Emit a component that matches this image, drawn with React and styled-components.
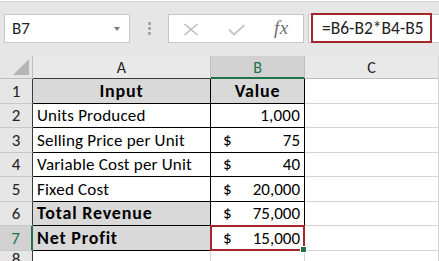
import React from 'react'
import styled, { createGlobalStyle } from 'styled-components'

const GlobalStyle = createGlobalStyle`
    html, body {
        margin: 0;
        padding: 0;
        background: #ffffff;
        overflow: hidden;
    }
    body {
        font-family: 'Carlito', 'Lato', sans-serif;
        color: #000;
    }
`

const rows = [
    { n: 1, label: 'Input', value: 'Value', head: true, h: 25 },
    { n: 2, label: 'Units Produced', value: '1,000', h: 24 },
    { n: 3, label: 'Selling Price per Unit', value: '75', money: true, h: 25 },
    { n: 4, label: 'Variable Cost per Unit', value: '40', money: true, h: 24 },
    { n: 5, label: 'Fixed Cost', value: '20,000', money: true, h: 25 },
    { n: 6, label: 'Total Revenue', value: '75,000', money: true, bold: true, h: 24 },
    { n: 7, label: 'Net Profit', value: '15,000', money: true, bold: true, active: true, h: 25 },
]

function App() {
    return (
        <>
            <GlobalStyle />
            <Page>
                <Toolbar>
                    <NameBox>
                        <span>B7</span>
                        <Caret />
                    </NameBox>
                    <Grip>
                        <i /><i /><i />
                    </Grip>
                    <ButtonBox>
                        <svg width="16" height="13" viewBox="0 0 16 13">
                            <path d="M1.5 1 L14.5 12 M14.5 1 L1.5 12" stroke="#bdbdbd" strokeWidth="1.6" fill="none" />
                        </svg>
                        <svg width="18" height="12" viewBox="0 0 18 12">
                            <path d="M1 5.5 L6 10.5 L16.5 1" stroke="#c4c4c4" strokeWidth="1.8" fill="none" />
                        </svg>
                        <Fx>fx</Fx>
                    </ButtonBox>
                    <FormulaBox>
                        <FormulaText>=B6-B2*B4-B5</FormulaText>
                    </FormulaBox>
                </Toolbar>

                <Sheet rowsTpl={`23px ${rows.map(r => r.h + 'px').join(' ')} 20px`}>
                    <Corner><Triangle /></Corner>
                    <ColHead>A</ColHead>
                    <ColHead selected>B</ColHead>
                    <ColHead last>C</ColHead>

                    {rows.map(r => (
                        <React.Fragment key={r.n}>
                            <RowHead active={r.active}>{r.n}</RowHead>
                            <Cell
                                table
                                fill={r.head || r.bold}
                                bold={r.head || r.bold}
                                center={r.head}
                            >
                                {r.label}
                            </Cell>
                            <Cell
                                table
                                fill={r.head}
                                bold={r.head}
                                center={r.head}
                                right={!r.money && !r.head}
                                selected={r.active}
                            >
                                {r.money ? (
                                    <Money><span>$</span><span>{r.value}</span></Money>
                                ) : r.value}
                                {r.active && <FillHandle />}
                            </Cell>
                            <Cell />
                        </React.Fragment>
                    ))}

                    <RowHead>8</RowHead>
                    <Cell />
                    <Cell />
                    <Cell />
                </Sheet>
            </Page>
        </>
    )
}

export default App

const Page = styled.div`
    width: 439px;
    height: 261px;
    overflow: hidden;
    background: #fff;
    padding-top: 1px;
    box-sizing: border-box;
`

const Toolbar = styled.div`
    height: 55px;
    box-sizing: border-box;
    border-top: 1px solid #d4d4d4;
    background: #e6e6e6;
    display: flex;
    align-items: flex-start;
    padding: 12px 0 0 4px;
`

const NameBox = styled.div`
    width: 126px;
    height: 29px;
    box-sizing: border-box;
    background: #fff;
    border: 1px solid #c6c6c6;
    display: flex;
    align-items: center;
    justify-content: space-between;
    padding: 0 9px 0 7px;
    font-size: 17px;
    color: #222;
`

const Caret = styled.div`
    width: 0;
    height: 0;
    border-left: 3px solid transparent;
    border-right: 3px solid transparent;
    border-top: 4px solid #7a7a7a;
    margin-top: 1px;
`

const Grip = styled.div`
    width: 3px;
    margin: 8px 17px 0 18px;
    display: flex;
    flex-direction: column;
    gap: 2px;

    i {
        display: block;
        width: 3px;
        height: 3px;
        background: #a6a6a6;
    }
`

const ButtonBox = styled.div`
    width: 136px;
    height: 29px;
    box-sizing: border-box;
    background: #fff;
    border: 1px solid #c6c6c6;
    display: flex;
    align-items: center;
    padding: 0 0 0 14px;

    svg:nth-child(1) {
        margin-top: 2px;
    }
    svg:nth-child(2) {
        margin: 2px 0 0 29px;
    }
`

const Fx = styled.span`
    font-family: 'Liberation Serif', serif;
    font-style: italic;
    font-size: 19px;
    color: #6e6e6e;
    margin-left: 28px;
    letter-spacing: 0.5px;
    margin-top: -1px;
`

const FormulaBox = styled.div`
    margin-left: 4px;
    flex: 1;
    height: 29px;
    box-sizing: border-box;
    background: #fff;
    border: 1px solid #c6c6c6;
    border-right: none;
    display: flex;
    align-items: center;
    padding-left: 2px;
`

const FormulaText = styled.div`
    width: 121px;
    height: 30px;
    margin-top: -2px;
    box-sizing: border-box;
    border: 2px solid #a4262c;
    display: flex;
    align-items: center;
    padding-left: 9px;
    font-size: 17.5px;
    color: #222;
    white-space: nowrap;
`

const Sheet = styled.div`
    display: grid;
    grid-template-columns: 33px 178px 94px 1fr;
    grid-template-rows: ${p => p.rowsTpl};
`

const Corner = styled.div`
    background: #e6e6e6;
    border-right: 1px solid #bdbdbd;
    border-bottom: 1px solid #bdbdbd;
    position: relative;
`

const Triangle = styled.div`
    position: absolute;
    right: 3px;
    bottom: 3px;
    width: 0;
    height: 0;
    border-left: 16px solid transparent;
    border-bottom: 16px solid #b5b5b5;
`

const ColHead = styled.div`
    background: ${p => (p.selected ? '#d2d2d2' : '#e9e9e9')};
    color: ${p => (p.selected ? '#217346' : '#222')};
    border-right: 1px solid ${p => (p.last ? '#d4d4d4' : '#bdbdbd')};
    border-bottom: ${p => (p.selected ? '2px solid #217346' : p.last ? '1px solid #bdbdbd' : '1px solid #3a3a3a')};
    display: flex;
    align-items: center;
    justify-content: center;
    font-size: 16px;
    padding-top: 1px;
`

const RowHead = styled.div`
    background: ${p => (p.active ? '#d2d2d2' : '#e6e6e6')};
    color: ${p => (p.active ? '#217346' : '#222')};
    border-bottom: 1px solid #c6c6c6;
    border-right: ${p => (p.active ? '2px solid #217346' : '1px solid #3a3a3a')};
    display: flex;
    align-items: flex-end;
    justify-content: center;
    padding-bottom: 1px;
    font-size: 17px;
    box-sizing: border-box;
`

const Cell = styled.div`
    position: relative;
    box-sizing: border-box;
    background: ${p => (p.fill ? '#d9d9d9' : '#fff')};
    border-right: 1px solid ${p => (p.table ? '#000' : '#d4d4d4')};
    border-bottom: 1px solid ${p => (p.table ? '#000' : '#d4d4d4')};
    display: flex;
    align-items: flex-end;
    justify-content: ${p => (p.center ? 'center' : p.right ? 'flex-end' : 'flex-start')};
    padding: 0 4px 1px 4px;
    font-size: ${p => (p.bold ? '18px' : '17px')};
    letter-spacing: ${p => (p.bold ? '0.8px' : '0.2px')};
    font-weight: ${p => (p.bold ? 700 : 400)};
    white-space: nowrap;

    ${p => p.selected && `
        &::after {
            content: '';
            position: absolute;
            inset: -1px -1px -1px -1px;
            border: 2px solid #a4262c;
            pointer-events: none;
        }
    `}
`

const Money = styled.div`
    flex: 1;
    display: flex;
    justify-content: space-between;
    padding-left: 8px;
    letter-spacing: 0;
`

const FillHandle = styled.div`
    position: absolute;
    right: -3px;
    bottom: -3px;
    width: 5px;
    height: 5px;
    background: #217346;
    border: 1px solid #fff;
    z-index: 2;
`
